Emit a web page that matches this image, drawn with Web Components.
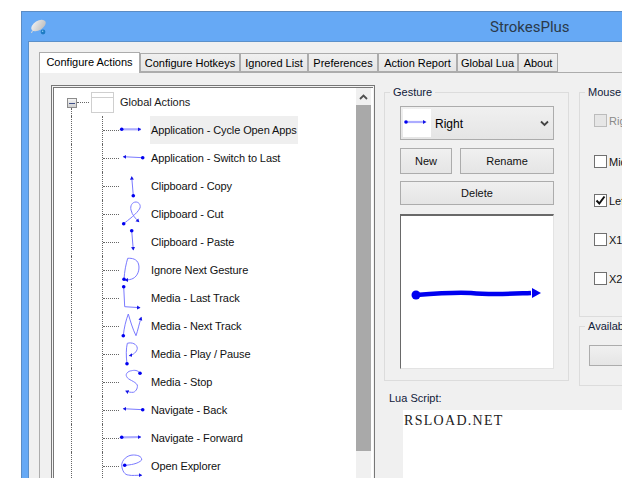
<!DOCTYPE html>
<html>
<head>
<meta charset="utf-8">
<title>StrokesPlus</title>
<style>
  html, body {
    margin: 0;
    height: 100%;
    overflow: hidden;
    background: #fff;
    font-family: "Liberation Sans", "Noto Sans", sans-serif;
    font-size: 11px;
    color: #000;
  }
</style>
</head>
<body>
<app-window title-text="StrokesPlus">
  <tab-strip>
    <win-tab active width="101">Configure Actions</win-tab>
    <win-tab width="100">Configure Hotkeys</win-tab>
    <win-tab width="68">Ignored List</win-tab>
    <win-tab width="70">Preferences</win-tab>
    <win-tab width="79">Action Report</win-tab>
    <win-tab width="61">Global Lua</win-tab>
    <win-tab width="40">About</win-tab>
  </tab-strip>
  <tab-pane>
    <gesture-tree slot="tree">
      <tree-root>Global Actions</tree-root>
      <tree-node selected d="M1.7 13.3H20.7" dot="1.7 13.3" thick>Application - Cycle Open Apps</tree-node>
      <tree-node d="M22.7 13.7L3.3 12.7" dot="22.7 13.7">Application - Switch to Last</tree-node>
      <tree-node d="M13.3 23.7L11.7 4.7" dot="13.3 23.7">Clipboard - Copy</tree-node>
      <tree-node d="M3.7 23.7C8 20 17 14 20 8C21 4 18 2 16 2C12 2 10 6 11 10C12 15 16 19 19 22" dot="3.7 23.7">Clipboard - Cut</tree-node>
      <tree-node d="M11.7 2.7L13.3 22" dot="11.7 2.7">Clipboard - Paste</tree-node>
      <tree-node d="M4 23.3C4.5 15 6 8 7.7 2.3C12 2 17 3 18.5 8C20 13 18 20 13 22.5C11 23.5 8 24 5 24" dot="4 23.3">Ignore Next Gesture</tree-node>
      <tree-node d="M3.7 2.7L4.7 22.7L20 23.7" dot="3.7 2.7">Media - Last Track</tree-node>
      <tree-node d="M3.3 23.7C4 16 6 8 8.3 2C10 8 13 18 16 23.7C18 18 19 12 21.3 5.3" dot="3.3 23.7">Media - Next Track</tree-node>
      <tree-node d="M7 23.7C6 16 6 9 7.3 3.3C12 2 17 4 17.3 8.3C17 12 13 15 9.3 15.7" dot="7 23.7">Media - Play / Pause</tree-node>
      <tree-node d="M20 5.3C18 2 14 2 11.7 2.7C8 3 5 6 6.7 8.7C8 12 15 13 17.3 17C18 21 15 24 13.3 24.3C11 24.5 8 24 5.7 23" dot="20 5.3">Media - Stop</tree-node>
      <tree-node d="M22.7 13.7L3.3 12.7" dot="22.7 13.7">Navigate - Back</tree-node>
      <tree-node d="M1.7 13.3L20.7 13" dot="1.7 13.3" thick>Navigate - Forward</tree-node>
      <tree-node d="M4.7 13.3C10 13 18 12 21.7 8C22 4 17 3 13.3 3C7 3 2 8 1.7 13C2 19 5 23 8.3 23C12 24 17 23 21.7 23.3" dot="4.7 13.3">Open Explorer</tree-node>
    </gesture-tree>

    <group-box slot="gesture" label="Gesture" pad="6px 14px 11px 15px">
      <combo-box text="Right"></combo-box>
      <div style="display:flex;gap:8px;margin-top:8px">
        <win-button width="52" height="26">New</win-button>
        <win-button width="94" height="26">Rename</win-button>
      </div>
      <win-button width="154" height="24" style="margin-top:7px">Delete</win-button>
      <gesture-preview></gesture-preview>
    </group-box>

    <group-box slot="mouse" label="Mouse" pad="14px 0 0 14px" height="233">
      <check-box disabled>Right</check-box>
      <check-box>Middle</check-box>
      <check-box checked>Left</check-box>
      <check-box>X1</check-box>
      <check-box>X2</check-box>
    </group-box>

    <group-box slot="available" label="Available Actions" pad="11px 0 0 9px" height="68">
      <win-button width="220" height="21"></win-button>
    </group-box>

    <lua-editor slot="lua" label="Lua Script:">RSLOAD.NET</lua-editor>
  </tab-pane>
</app-window>

<script>
class AppWindow extends HTMLElement {
  constructor() {
    super();
    this.attachShadow({ mode: "open" });
    this.shadowRoot.innerHTML = `
      <style>
        :host {
          display: block;
          width: 1012px;
          height: 467px;
          margin: 11px 0 0 21px;
          box-sizing: border-box;
          background: #66a9f5;
          border: 1px solid #5b8cc4;
          border-bottom: 0;
          padding: 0 0 0 6px;
        }
        .bar {
          display: flex;
          align-items: center;
          height: 29px;
          margin-left: -6px;
          padding-left: 8px;
        }
        .bar svg { flex: none; }
        .title {
          margin-left: 442px;
          font-size: 15px;
          color: #2b3a4a;
          font-family: Roboto, "Noto Sans", sans-serif;
        }
        .client {
          background: #f0f0f0;
          border: 1px solid #5c90c9;
          border-width: 1px 0 0 1px;
          height: 437px;
          padding: 10px 0 0 10px;
          box-sizing: border-box;
        }
      </style>
      <div class="bar">
        <svg width="18" height="17" viewBox="0 0 18 17">
          <defs>
            <linearGradient id="shell" x1="0" y1="0" x2="1" y2="1">
              <stop offset="0" stop-color="#f4f4f4"/>
              <stop offset="1" stop-color="#b9b9b9"/>
            </linearGradient>
          </defs>
          <path d="M2.5 12.5L1.5 15" stroke="#d8d8d8" stroke-width="1" fill="none"/>
          <ellipse cx="8.5" cy="7.5" rx="8" ry="4.6" transform="rotate(-32 8.5 7.5)" fill="url(#shell)"/>
          <circle cx="13" cy="14" r="2.4" fill="#1f7cc4"/>
          <circle cx="12.6" cy="13.2" r="0.8" fill="#8fd0f5"/>
        </svg>
        <span class="title"></span>
      </div>
      <div class="client"><slot></slot></div>
    `;
  }

  connectedCallback() {
    this.shadowRoot.querySelector(".title").textContent = this.getAttribute("title-text") || "";
  }
}

class TabStrip extends HTMLElement {
  constructor() {
    super();
    this.attachShadow({ mode: "open" });
    this.shadowRoot.innerHTML = `
      <style>
        :host {
          display: flex;
          align-items: flex-end;
          height: 21px;
          position: relative;
          z-index: 1;
        }
      </style>
      <slot></slot>
    `;
  }
}

class WinTab extends HTMLElement {
  constructor() {
    super();
    this.attachShadow({ mode: "open" });
    this.shadowRoot.innerHTML = `
      <style>
        :host {
          display: block;
          box-sizing: border-box;
          height: 19px;
          margin-bottom: 1px;
          border: 1px solid #acacac;
          border-bottom: 1px solid #acacac;
          background: linear-gradient(#f0f0f0, #e5e5e5);
          text-align: center;
          line-height: 18px;
          white-space: nowrap;
        }
        :host([active]) {
          height: 21px;
          margin-bottom: 0;
          background: #fff;
          border-bottom: 0;
          line-height: 19px;
        }
      </style>
      <slot></slot>
    `;
  }

  connectedCallback() {
    this.style.width = this.getAttribute("width") + "px";
  }
}

class TabPane extends HTMLElement {
  constructor() {
    super();
    this.attachShadow({ mode: "open" });
    this.shadowRoot.innerHTML = `
      <style>
        :host {
          display: block;
          box-sizing: border-box;
          height: 420px;
          margin-top: -1px;
          border-top: 1px solid #acacac;
          border-left: 1px solid #acacac;
          padding: 12px 0 0 11px;
        }
        .layout {
          display: grid;
          grid-template-columns: 323px 185px 240px;
          grid-template-rows: 234px 67px 1fr;
          column-gap: 10px;
          margin-top: -1px;
          height: 400px;
        }
        .tree { grid-row: 1 / 4; margin-top: 1px; margin-right: -1px; }
        .gesture { grid-row: 1 / 3; grid-column: 2; }
        .mouse { grid-column: 3; grid-row: 1; }
        .available { grid-column: 3; grid-row: 2; }
        .lua { grid-column: 2 / 4; grid-row: 3; }
      </style>
      <div class="layout">
        <div class="tree"><slot name="tree"></slot></div>
        <div class="gesture"><slot name="gesture"></slot></div>
        <div class="mouse"><slot name="mouse"></slot></div>
        <div class="available"><slot name="available"></slot></div>
        <div class="lua"><slot name="lua"></slot></div>
      </div>
    `;
  }
}

class GestureTree extends HTMLElement {
  constructor() {
    super();
    this.attachShadow({ mode: "open" });
    this.shadowRoot.innerHTML = `
      <style>
        :host {
          display: block;
          box-sizing: border-box;
          height: 400px;
          border: 1px solid #777;
          padding: 1px;
          background: #f4f4f4;
        }
        .inner {
          display: flex;
          height: 100%;
          border-top: 1px solid #777;
          border-left: 1px solid #777;
          background: #fff;
        }
        .rows {
          width: 302px;
          flex: none;
          overflow: hidden;
        }
        .scroll {
          width: 15px;
          flex: none;
          background: #f0f0f0;
          display: flex;
          flex-direction: column;
        }
        .up {
          height: 17px;
          display: flex;
          align-items: center;
          justify-content: center;
        }
        .thumb { height: 346px; background: #a9a9a9; }
      </style>
      <div class="inner">
        <div class="rows"><slot></slot></div>
        <div class="scroll">
          <div class="up">
            <svg width="9" height="6" viewBox="0 0 9 6">
              <path d="M1 5L4.5 1.5L8 5" fill="none" stroke="#505050" stroke-width="1.8"/>
            </svg>
          </div>
          <div class="thumb"></div>
        </div>
      </div>
    `;
  }
}

class TreeRoot extends HTMLElement {
  constructor() {
    super();
    this.attachShadow({ mode: "open" });
    this.shadowRoot.innerHTML = `
      <style>
        :host {
          display: flex;
          height: 28px;
          padding-left: 13px;
          line-height: 28px;
          color: #1a1a1a;
          white-space: nowrap;
        }
        .col {
          width: 10px;
          display: flex;
          flex-direction: column;
          align-items: flex-start;
          padding-top: 10px;
          box-sizing: border-box;
        }
        .minus {
          box-sizing: border-box;
          width: 10px;
          height: 10px;
          flex: none;
          border: 1px solid #8c8c8c;
          background: linear-gradient(#f4f4f4, #cfcfcf);
          display: flex;
          align-items: center;
          justify-content: center;
        }
        .minus i { display: block; width: 6px; height: 1px; background: #3f4f86; }
        .down { flex: 1; margin-left: 4px; border-left: 1px dotted #666; }
        .link {
          width: 12px;
          height: 15px;
          border-bottom: 1px dotted #666;
          box-sizing: border-box;
          margin: 0 2px 0 0;
        }
        .page {
          box-sizing: border-box;
          width: 23px;
          height: 21px;
          margin: 4px 6px 0 0;
          border: 1px solid #cfcfcf;
          background: linear-gradient(#fff 4px, #cfcfcf 4px, #cfcfcf 5px, #fff 5px);
        }
      </style>
      <div class="col"><div class="minus"><i></i></div><div class="down"></div></div>
      <div class="link"></div>
      <div class="page"></div>
      <slot></slot>
    `;
  }
}

class TreeNode extends HTMLElement {
  constructor() {
    super();
    this.attachShadow({ mode: "open" });
    this.shadowRoot.innerHTML = `
      <style>
        :host {
          display: flex;
          height: 28px;
          padding-left: 17px;
          line-height: 28px;
          white-space: nowrap;
          color: #111;
        }
        .guide { width: 30px; flex: none; border-left: 1px dotted #666; }
        .elbow {
          width: 17px;
          flex: none;
          height: 28px;
          border-left: 1px dotted #666;
        }
        .elbow i {
          display: block;
          height: 15px;
          width: 16px;
          box-sizing: border-box;
          border-bottom: 1px dotted #666;
        }
        svg { flex: none; width: 30px; height: 28px; overflow: visible; }
        .label { width: 148px; flex: none; padding-left: 1px; box-sizing: border-box; letter-spacing: -0.1px; }
        :host([selected]) .label { background: #efefef; }
      </style>
      <div class="guide"></div>
      <div class="elbow"><i></i></div>
      <svg viewBox="0 0 30 28">
        <defs>
          <marker id="tip" markerUnits="userSpaceOnUse" markerWidth="6" markerHeight="6" refX="3" refY="3" orient="auto">
            <path d="M0 1L3.5 3L0 5Z" fill="#1414e6"/>
          </marker>
        </defs>
        <path class="line" fill="none" stroke="#7a7aff" stroke-width="1" marker-end="url(#tip)"/>
        <circle class="dot" r="1.8" fill="#0000f0"/>
      </svg>
      <div class="label"><slot></slot></div>
    `;
  }

  connectedCallback() {
    const line = this.shadowRoot.querySelector(".line");
    const dot = this.shadowRoot.querySelector(".dot");
    const pos = this.getAttribute("dot").split(" ");
    line.setAttribute("d", this.getAttribute("d"));
    dot.setAttribute("cx", pos[0]);
    dot.setAttribute("cy", pos[1]);
    if (this.hasAttribute("thick")) {
      line.setAttribute("stroke", "#acacff");
      line.setAttribute("stroke-width", "2.2");
    }
  }
}

class GroupBox extends HTMLElement {
  constructor() {
    super();
    this.attachShadow({ mode: "open" });
    this.shadowRoot.innerHTML = `
      <style>
        :host { display: block; }
        fieldset {
          margin: 0;
          padding: 0;
          box-sizing: border-box;
          border: 1px solid #dcdcdc;
          min-width: 0;
        }
        legend { padding: 0 3px; margin-left: 5px; line-height: 16px; color: #10203a; white-space: nowrap; }
      </style>
      <fieldset><legend></legend><div class="body"><slot></slot></div></fieldset>
    `;
  }

  connectedCallback() {
    const box = this.shadowRoot.querySelector("fieldset");
    this.shadowRoot.querySelector("legend").textContent = this.getAttribute("label");
    this.shadowRoot.querySelector(".body").style.padding = this.getAttribute("pad");
    if (this.hasAttribute("height")) box.style.height = this.getAttribute("height") + "px";
  }
}

class WinButton extends HTMLElement {
  constructor() {
    super();
    this.attachShadow({ mode: "open" });
    this.shadowRoot.innerHTML = `
      <style>
        :host {
          display: flex;
          align-items: center;
          justify-content: center;
          box-sizing: border-box;
          border: 1px solid #acacac;
          background: linear-gradient(#f0f0f0, #e5e5e5);
          color: #111;
          flex: none;
        }
      </style>
      <slot></slot>
    `;
  }

  connectedCallback() {
    this.style.width = this.getAttribute("width") + "px";
    this.style.height = this.getAttribute("height") + "px";
  }
}

class ComboBox extends HTMLElement {
  constructor() {
    super();
    this.attachShadow({ mode: "open" });
    this.shadowRoot.innerHTML = `
      <style>
        :host {
          display: flex;
          align-items: center;
          box-sizing: border-box;
          width: 154px;
          height: 34px;
          padding: 0 4px 0 2px;
          border: 1px solid #acacac;
          background: linear-gradient(#f0f0f0, #e5e5e5);
          font-size: 12px;
        }
        .pic { width: 28px; height: 28px; background: #fff; flex: none; display: block; }
        .text { flex: 1; padding: 1px 0 0 4px; }
      </style>
      <svg class="pic" viewBox="0 0 28 28">
        <path d="M3 13H21" stroke="#acacff" stroke-width="2.2"/>
        <path d="M20 11L23.5 13L20 15Z" fill="#1414e6"/>
        <circle cx="3" cy="13" r="1.8" fill="#0000f0"/>
      </svg>
      <span class="text"></span>
      <svg width="9" height="7" viewBox="0 0 9 7">
        <path d="M1 1.5L4.5 5L8 1.5" fill="none" stroke="#444" stroke-width="1.8"/>
      </svg>
    `;
  }

  connectedCallback() {
    this.shadowRoot.querySelector(".text").textContent = this.getAttribute("text");
  }
}

class GesturePreview extends HTMLElement {
  constructor() {
    super();
    this.attachShadow({ mode: "open" });
    this.shadowRoot.innerHTML = `
      <style>
        :host {
          display: block;
          box-sizing: border-box;
          width: 154px;
          height: 155px;
          margin-top: 9px;
          background: #fff;
          border-style: solid;
          border-width: 2px 1px 1px 1px;
          border-color: #696969 #e3e3e3 #e3e3e3 #696969;
        }
        svg { display: block; }
      </style>
      <svg width="151" height="152" viewBox="0 0 151 152">
        <path d="M15 79C40 77 55 76 70 77C90 79 105 78 130 77" fill="none" stroke="#0000f0" stroke-width="4.5"/>
        <path d="M131 72L140 77L131 82Z" fill="#0000f0"/>
        <circle cx="15" cy="79" r="4.5" fill="#0000f0"/>
      </svg>
    `;
  }
}

class CheckBox extends HTMLElement {
  constructor() {
    super();
    this.attachShadow({ mode: "open" });
    this.shadowRoot.innerHTML = `
      <style>
        :host {
          display: flex;
          align-items: center;
          gap: 2px;
          height: 13px;
          margin-bottom: 26px;
          white-space: nowrap;
          color: #111;
        }
        .box {
          box-sizing: border-box;
          width: 13px;
          height: 13px;
          flex: none;
          border: 1px solid #707070;
          background: #fff;
        }
        .box svg { display: none; }
        :host([checked]) .box svg { display: block; }
        :host([disabled]) { color: #8a8a8a; margin-bottom: 28px; }
        :host([disabled]) .box { background: #e6e6e6; border-color: #bcbcbc; }
      </style>
      <div class="box">
        <svg width="11" height="11" viewBox="0 0 11 11">
          <path d="M1.5 5.5L4.3 8.5L9.5 1.5" fill="none" stroke="#111" stroke-width="2"/>
        </svg>
      </div>
      <slot></slot>
    `;
  }
}

class LuaEditor extends HTMLElement {
  constructor() {
    super();
    this.attachShadow({ mode: "open" });
    this.shadowRoot.innerHTML = `
      <style>
        :host { display: block; }
        .label { padding: 5px 0 0 5px; line-height: 16px; color: #10203a; }
        .edit {
          margin: 4px 0 0 19px;
          height: 80px;
          padding: 2px 0 0 1px;
          background: #fff;
          font-family: "Liberation Serif", "Liberation Mono", serif;
          font-size: 14px;
          letter-spacing: 1.3px;
          line-height: 18px;
          color: #222;
        }
      </style>
      <div class="label"></div>
      <div class="edit"><slot></slot></div>
    `;
  }

  connectedCallback() {
    this.shadowRoot.querySelector(".label").textContent = this.getAttribute("label");
  }
}

customElements.define("app-window", AppWindow);
customElements.define("tab-strip", TabStrip);
customElements.define("win-tab", WinTab);
customElements.define("tab-pane", TabPane);
customElements.define("gesture-tree", GestureTree);
customElements.define("tree-root", TreeRoot);
customElements.define("tree-node", TreeNode);
customElements.define("group-box", GroupBox);
customElements.define("win-button", WinButton);
customElements.define("combo-box", ComboBox);
customElements.define("gesture-preview", GesturePreview);
customElements.define("check-box", CheckBox);
customElements.define("lua-editor", LuaEditor);
</script>
</body>
</html>
